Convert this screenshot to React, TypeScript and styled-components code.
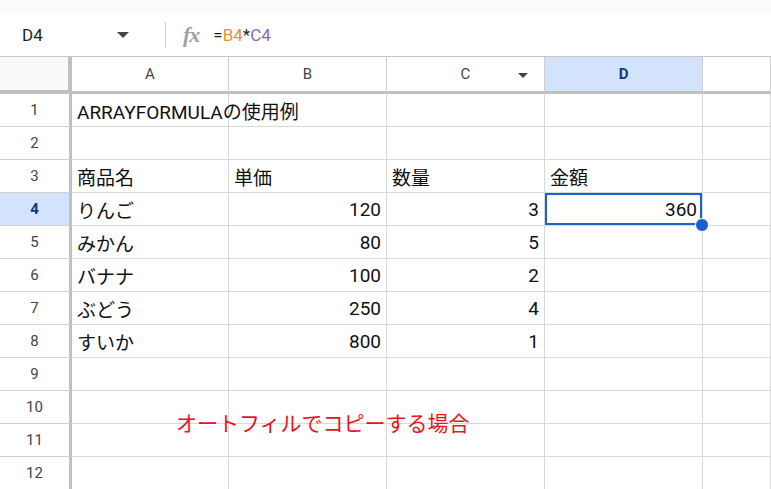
import React, { FC } from 'react';
import styled, { createGlobalStyle } from 'styled-components';

const Global = createGlobalStyle`
	body { margin: 0; background: #fff; font-family: Roboto, Arial, 'Noto Sans CJK JP', sans-serif; overflow: hidden; }
`;

const cols = ['A', 'B', 'C', 'D'];
const rows: (string | number)[][] = [
	['ARRAYFORMULAの使用例', '', '', ''],
	['', '', '', ''],
	['商品名', '単価', '数量', '金額'],
	['りんご', 120, 3, 360],
	['みかん', 80, 5, ''],
	['バナナ', 100, 2, ''],
	['ぶどう', 250, 4, ''],
	['すいか', 800, 1, ''],
	['', '', '', ''],
	['', '', '', ''],
	['', '', '', ''],
	['', '', '', ''],
];

const App: FC = () => (
	<Page>
		<Global />
		<TopStrip />
		<FormulaBar>
			<NameBox>
				D4
				<Caret />
			</NameBox>
			<Divider />
			<Fx>fx</Fx>
			<Formula>
				=<Ref color='#e69138'>B4</Ref>*<Ref color='#8e63ce'>C4</Ref>
			</Formula>
		</FormulaBar>
		<Grid>
			<Corner />
			{cols.map((c) => (
				<ColHead key={c} active={c === 'D'}>
					{c}
					{c === 'C' && <HeadCaret />}
				</ColHead>
			))}
			<ColHead />
			{rows.map((r, i) => (
				<React.Fragment key={i}>
					<RowHead active={i === 3}>{i + 1}</RowHead>
					{r.map((v, j) => (
						<Cell key={j} numeric={typeof v === 'number'} selected={i === 3 && j === 3}>
							{v}
							{i === 3 && j === 3 && <Handle />}
						</Cell>
					))}
					<Cell />
				</React.Fragment>
			))}
		</Grid>
		<Note>オートフィルでコピーする場合</Note>
	</Page>
);

const Page = styled.div`
	position: relative;
	width: 771px;
	height: 489px;
	overflow: hidden;
`;
const TopStrip = styled.div`
	height: 13px;
	background: #f9fbfd;
`;
const FormulaBar = styled.div`
	height: 43px;
	display: flex;
	align-items: center;
	border-bottom: 1px solid #c7c7c7;
`;
const NameBox = styled.div`
	width: 141px;
	padding-left: 22px;
	display: flex;
	align-items: center;
	justify-content: space-between;
	box-sizing: border-box;
	padding-right: 12px;
	font-size: 17px;
	color: #1f1f1f;
`;
const Caret = styled.span`
	border-left: 6px solid transparent;
	border-right: 6px solid transparent;
	border-top: 6px solid #444;
`;
const HeadCaret = styled(Caret)`
	position: absolute;
	right: 16px;
	top: 16px;
	border-left-width: 5px;
	border-right-width: 5px;
	border-top-width: 5px;
`;
const Divider = styled.div`
	width: 1px;
	height: 26px;
	background: #d0d0d0;
	margin-left: 24px;
`;
const Fx = styled.span`
	margin-left: 17px;
	font-family: 'Liberation Serif', serif;
	font-style: italic;
	font-weight: bold;
	font-size: 22px;
	color: #a0a0a0;
	letter-spacing: -1px;
`;
const Formula = styled.span`
	margin-left: 14px;
	font-size: 17px;
	color: #1f1f1f;
`;
const Ref = styled.span<{ color: string }>`
	color: ${(p) => p.color};
`;
const Grid = styled.div`
	display: grid;
	grid-template-columns: 72px 157px 158px 158px 158px 1fr;
	grid-template-rows: 37px repeat(12, 33px);
`;
const Corner = styled.div`
	background: #f8f9fa;
	border-right: 4px solid #c0c0c0;
	border-bottom: 4px solid #c0c0c0;
	box-sizing: border-box;
`;
const ColHead = styled.div<{ active?: boolean }>`
	position: relative;
	display: flex;
	align-items: center;
	justify-content: center;
	font-size: 15px;
	color: ${(p) => (p.active ? '#0b3a7a' : '#444')};
	font-weight: ${(p) => (p.active ? 'bold' : 'normal')};
	background: ${(p) => (p.active ? '#d3e3fd' : '#fff')};
	border-right: 1px solid #d0d0d0;
	border-bottom: 3px solid #c0c0c0;
`;
const RowHead = styled.div<{ active?: boolean }>`
	display: flex;
	align-items: center;
	justify-content: center;
	font-size: 15px;
	color: ${(p) => (p.active ? '#0b3a7a' : '#444')};
	font-weight: ${(p) => (p.active ? 'bold' : 'normal')};
	background: ${(p) => (p.active ? '#d3e3fd' : '#fff')};
	border-right: 3px solid #c0c0c0;
	border-bottom: 1px solid #d0d0d0;
`;
const Cell = styled.div<{ numeric?: boolean; selected?: boolean }>`
	position: relative;
	display: flex;
	align-items: center;
	justify-content: ${(p) => (p.numeric ? 'flex-end' : 'flex-start')};
	padding: 0 5px;
	font-size: 19px;
	color: #111;
	white-space: nowrap;
	border-right: 1px solid #d9d9d9;
	border-bottom: 1px solid #d9d9d9;
	box-shadow: ${(p) => (p.selected ? 'inset 0 0 0 2px #1a64c8' : 'none')};
`;
const Handle = styled.span`
	position: absolute;
	right: -7px;
	bottom: -7px;
	width: 12px;
	height: 12px;
	border-radius: 50%;
	background: #1a5fcc;
	border: 1px solid #fff;
	z-index: 2;
`;
const Note = styled.div`
	position: absolute;
	left: 176px;
	top: 407px;
	font-size: 21px;
	color: #e8141b;
	font-family: 'Noto Sans CJK JP', sans-serif;
`;

export default App;
